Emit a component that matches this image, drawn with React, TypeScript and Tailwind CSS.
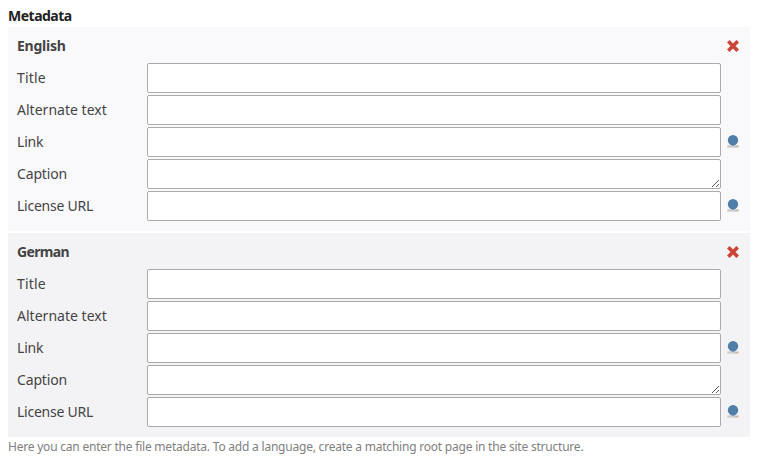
const fields = [
  { label: "Title", tracking: "tracking-[0.15px]" },
  { label: "Alternate text", tracking: "tracking-[0.02px]" },
  { label: "Link", tracking: "tracking-[-0.2px]", picker: true },
  { label: "Caption", tracking: "tracking-[-0.15px]", multiline: true },
  { label: "License URL", tracking: "tracking-[-0.25px]", picker: true },
];

function DeleteIcon() {
  return (
    <svg width="12" height="12" viewBox="0 0 12 12" fill="none" stroke="#cb4538" strokeWidth="3.7">
      <path d="M1.300 1.300 10.700 10.700M10.700 1.300 1.300 10.700" />
    </svg>
  );
}

function PickerIcon() {
  return (
    <svg width="12" height="14" viewBox="0 0 12 14">
      <path d="M.2 10.300h11.600v2.400H.2z" fill="#cdcdcd" />
      <path d="M8 11h2.700v1H8z" fill="#d9ad98" />
      <path d="M6 0a5.200 5.200 0 0 1 5.200 5.200c0 2.400-1.400 3.500-3 4.900Q6 11.600 3.800 10.100C2.200 8.700.8 7.600.8 5.200A5.200 5.200 0 0 1 6 0Z" fill="#4f7fa9" />
    </svg>
  );
}

function Panel({ title, tone, tracking }: { title: string; tone: string; tracking: string }) {
  return (
    <section className={`h-[204px] w-[742px] pl-[9px] ${tone}`}>
      <header className="flex h-9 items-center justify-between pr-[11px] pt-[2px]">
        <h2 className={`text-[14px] font-bold leading-[20px] ${tracking}`}>{title}</h2>
        <button aria-label="Delete" className="-mt-px"><DeleteIcon /></button>
      </header>
      <div className="flex flex-col gap-0.5">
        {fields.map((f) => (
          <div key={f.label} className="flex h-[30px] items-center">
            <label className={`w-[130px] whitespace-nowrap text-[14px] leading-[20px] ${f.tracking}`}>{f.label}</label>
            <div className="relative h-[30px] w-[574px]">
              {f.multiline ? (
                <>
                  <textarea aria-label={f.label} className="block h-[30px] w-full resize-none rounded-[2px] border border-[#aaa] bg-white" />
                  <svg className="absolute bottom-0.5 right-0.5" width="7" height="7" viewBox="0 0 7 7" stroke="#444" strokeWidth="0.9">
                    <path d="M0 7 7 0M4 7 7 4" />
                  </svg>
                </>
              ) : (
                <input aria-label={f.label} className="block h-[30px] w-full rounded-[2px] border border-[#aaa] bg-white" />
              )}
            </div>
            {f.picker && <button aria-label="Pick link" className="ml-1.5"><PickerIcon /></button>}
          </div>
        ))}
      </div>
    </section>
  );
}

export default function App() {
  return (
    <main className="h-[456px] w-[759px] overflow-hidden bg-white pl-2 pt-[6px] font-['Noto_Sans',sans-serif] text-[#444]">
      <h1 className="h-[21px] text-[14px] font-bold leading-[20px] tracking-[-0.5px] text-[#222]">Metadata</h1>
      <div className="flex flex-col gap-0.5">
        <Panel title="English" tone="bg-[#f9f9fb]" tracking="tracking-[-0.25px]" />
        <Panel title="German" tone="bg-[#f3f3f5]" tracking="tracking-[-0.65px]" />
      </div>
      <p className="whitespace-nowrap text-[12px] leading-[20px] tracking-[-0.216px] text-[#808080]">
        Here you can enter the file metadata. To add a language, create a matching root page in the site structure.
      </p>
    </main>
  );
}
